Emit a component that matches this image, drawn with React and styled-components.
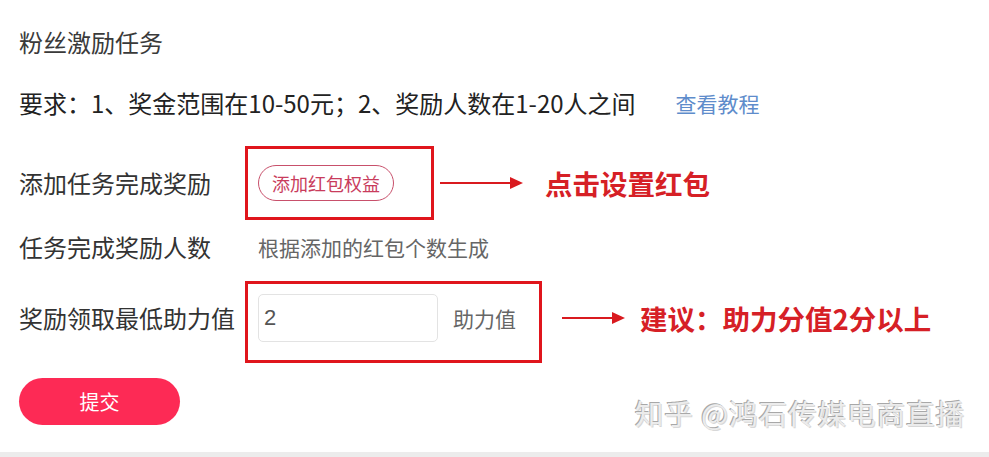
import React from 'react'
import styled, { createGlobalStyle } from 'styled-components'

const GlobalStyle = createGlobalStyle`
  html, body {
    margin: 0;
    padding: 0;
    background: #ffffff;
  }
  body {
    font-family: "Noto Sans CJK SC", "Noto Sans", "Liberation Sans", sans-serif;
  }
`

const Arrow = ({ width }) => (
  <svg width={width} height="14" viewBox={`0 0 ${width} 14`}>
    <line x1="0" y1="7" x2={width - 12} y2="7" stroke="#d91a1f" strokeWidth="2" />
    <polygon points={`${width - 13},1 ${width},7 ${width - 13},13`} fill="#d91a1f" />
  </svg>
)

export default function App() {
  return (
    <>
      <GlobalStyle />
      <Page>
        <Title>粉丝激励任务</Title>
        <Requirement>
          要求：1、奖金范围在10-50元；2、奖励人数在1-20人之间
          <TutorialLink>查看教程</TutorialLink>
        </Requirement>

        <Row $gap={27}>
          <Label>添加任务完成奖励</Label>
          <Frame $marked $pad="16px 37px 16px 10px">
            <PillButton>添加红包权益</PillButton>
          </Frame>
          <ArrowWrap $left={6} $right={22}>
            <Arrow width={83} />
          </ArrowWrap>
          <Note>点击设置红包</Note>
        </Row>

        <Row $gap={8}>
          <Label>任务完成奖励人数</Label>
          <Frame $pad="0 10px">
            <Hint>根据添加的红包个数生成</Hint>
          </Frame>
        </Row>

        <Row $gap={15}>
          <Label $lift={8}>奖励领取最低助力值</Label>
          <Frame $marked $pad="10px 23px 18px 10px">
            <InputGroup>
              <NumberInput defaultValue="2" />
              <Unit>助力值</Unit>
            </InputGroup>
          </Frame>
          <ArrowWrap $left={20} $right={15} $lift={8}>
            <Arrow width={63} />
          </ArrowWrap>
          <Note $lift={8}>建议：助力分值2分以上</Note>
        </Row>

        <SubmitButton>提交</SubmitButton>
        <Watermark>知乎 @鸿石传媒电商直播</Watermark>
      </Page>
      <Band />
    </>
  )
}

const Page = styled.div`
  position: relative;
  padding: 26px 0 27px 19px;
`

const Title = styled.div`
  font-size: 24px;
  line-height: 32px;
  color: #3a3a3a;
`

const Requirement = styled.div`
  margin-top: 29px;
  display: flex;
  align-items: center;
  font-size: 24px;
  line-height: 32px;
  color: #222222;
`

const TutorialLink = styled.a`
  margin-left: 40px;
  font-size: 21px;
  color: #5e8ccb;
  cursor: pointer;
`

const Row = styled.div`
  margin-top: ${({ $gap }) => $gap}px;
  display: flex;
  align-items: center;
`

const Label = styled.div`
  width: 226px;
  flex-shrink: 0;
  font-size: 24px;
  line-height: 32px;
  color: #333333;
  padding-bottom: ${({ $lift }) => $lift || 0}px;
  white-space: nowrap;
`

const Frame = styled.div`
  display: flex;
  align-items: center;
  border: 3px solid ${({ $marked }) => ($marked ? '#e0151c' : 'transparent')};
  padding: ${({ $pad }) => $pad};
`

const PillButton = styled.button`
  height: 36px;
  padding: 0 13px;
  border: 1px solid #c8506b;
  border-radius: 18px;
  background: #ffffff;
  color: #c93c5c;
  font-family: inherit;
  font-size: 18px;
  line-height: 34px;
  cursor: pointer;
`

const Hint = styled.div`
  font-size: 21px;
  line-height: 32px;
  color: #666666;
`

const InputGroup = styled.div`
  display: flex;
  align-items: center;
`

const NumberInput = styled.input`
  box-sizing: border-box;
  width: 180px;
  height: 48px;
  padding: 0 5px;
  border: 1px solid #e3e3e3;
  border-radius: 5px;
  font-family: "Liberation Sans", "Noto Sans", sans-serif;
  font-size: 22px;
  color: #555555;
  outline: none;
`

const Unit = styled.span`
  margin-left: 15px;
  font-size: 21px;
  color: #666666;
`

const ArrowWrap = styled.div`
  display: flex;
  margin-left: ${({ $left }) => $left}px;
  margin-right: ${({ $right }) => $right}px;
  padding-bottom: ${({ $lift }) => $lift || 0}px;
`

const Note = styled.div`
  font-size: 27.5px;
  font-weight: 700;
  line-height: 36px;
  color: #d62026;
  padding-bottom: ${({ $lift }) => $lift || 0}px;
  white-space: nowrap;
`

const SubmitButton = styled.button`
  display: block;
  margin-top: 15px;
  width: 161px;
  height: 47px;
  border: none;
  border-radius: 24px;
  background: #fd2a55;
  color: #ffffff;
  font-family: inherit;
  font-size: 20px;
  cursor: pointer;
`

const Watermark = styled.div`
  position: absolute;
  right: 24px;
  top: 397px;
  font-size: 28.5px;
  line-height: 32px;
  color: #ececec;
  text-shadow: -1px -1px 0 #a8a8a8, 1px 1px 0 #d8d8d8;
  letter-spacing: 1px;
  pointer-events: none;
`

const Band = styled.div`
  height: 12px;
  background: #ececec;
`
